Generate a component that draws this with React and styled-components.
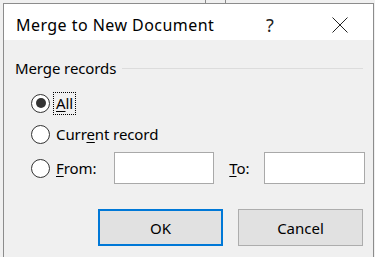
import React, { useState } from "react";
import styled, { createGlobalStyle } from "styled-components";

const GlobalStyle = createGlobalStyle`
  html, body {
    margin: 0;
    padding: 0;
    background: #f0f0f0;
    font-family: "Noto Sans", "Open Sans", sans-serif;
    overflow: hidden;
  }
`;

const Backdrop = styled.div`
  width: 375px;
  height: 257px;
  padding: 3px 0 0 3px;
  box-sizing: border-box;
  background: #f0f0f0;
  position: relative;
`;

// bits of the window behind the dialog, peeking above it
const Behind = styled.span`
  position: absolute;
  top: 0;
  left: ${(p) => p.x}px;
  width: 1px;
  height: 3px;
  background: #8a8a8a;
`;

const Window = styled.div`
  width: 371px;
  height: 260px;
  box-sizing: border-box;
  border: 1px solid #8c8c8c;
  border-bottom: none;
  background: #f0f0f0;
  display: flex;
  flex-direction: column;
`;

const TitleBar = styled.div`
  height: 36px;
  box-sizing: border-box;
  padding: 5px 0 0 12px;
  background: #fff;
  display: flex;
  align-items: center;
  color: #000;
`;

const Title = styled.div`
  flex: 1;
  font-size: 16px;
  letter-spacing: 0.45px;
`;

const TitleButton = styled.div`
  width: ${(p) => p.w}px;
  display: flex;
  justify-content: center;
  align-items: center;
  font-size: 18px;
  color: #222;
`;

const Body = styled.div`
  padding: 19px 10px 0 11px;
  display: flex;
  flex-direction: column;
`;

const GroupHead = styled.div`
  display: flex;
  align-items: center;
  gap: 6px;
  font-size: 15px;
  letter-spacing: -0.1px;
  color: #000;
  height: 18px;

  &::after {
    content: "";
    flex: 1;
    height: 1px;
    background: #dcdcdc;
    margin-top: 1px;
  }
`;

const Options = styled.div`
  display: flex;
  flex-direction: column;
  padding-left: 16px;
  margin-top: 11px;
`;

const OptionRow = styled.label`
  display: flex;
  align-items: center;
  height: ${(p) => p.h}px;
  font-size: 15px;
  letter-spacing: -0.1px;
  color: #000;
  cursor: default;
`;

const RadioCircle = styled.span`
  width: 19px;
  height: 19px;
  border: 1px solid #333;
  border-radius: 50%;
  background: #fff;
  box-sizing: border-box;
  display: flex;
  align-items: center;
  justify-content: center;
  margin-right: 6px;
  flex-shrink: 0;

  &::after {
    content: "";
    width: 10px;
    height: 10px;
    border-radius: 50%;
    background: ${(p) => (p.checked ? "#333" : "transparent")};
  }
`;

const LabelText = styled.span`
  padding: 1px 2px;
  margin-left: -2px;
  outline: ${(p) => (p.focused ? "1px dotted #000" : "none")};
  outline-offset: 0;
  line-height: 19px;
`;

const Key = styled.u`
  text-underline-offset: 2px;
`;

const Field = styled.input`
  width: ${(p) => p.w}px;
  height: 32px;
  box-sizing: border-box;
  border: 1px solid #a9a9a9;
  background: #fff;
  outline: none;
  margin-left: ${(p) => p.ml}px;
  font: inherit;
`;

const Buttons = styled.div`
  display: flex;
  justify-content: flex-end;
  gap: 15px;
  margin-top: 23px;
  padding-right: 0;
`;

const Button = styled.button`
  width: 125px;
  height: 37px;
  box-sizing: border-box;
  background: #e1e1e1;
  border: ${(p) => (p.primary ? "2px solid #0078d7" : "1px solid #adadad")};
  font-family: "Noto Sans", "Open Sans", sans-serif;
  font-size: 15px;
  color: #000;
  padding: 0;
`;

const CloseIcon = () => (
  <svg width="16" height="16" viewBox="0 0 16 16">
    <path d="M0.5 0.5 L15.5 15.5 M15.5 0.5 L0.5 15.5" stroke="#222" strokeWidth="1" />
  </svg>
);

const App = () => {
  const [choice, setChoice] = useState("all");
  return (
    <>
      <GlobalStyle />
      <Backdrop>
        <Behind x={205} />
        <Behind x={225} />
        <Window>
          <TitleBar>
            <Title>Merge to New Document</Title>
            <TitleButton w={20}>?</TitleButton>
            <TitleButton w={30} style={{ marginLeft: 45, marginRight: 18 }}>
              <CloseIcon />
            </TitleButton>
          </TitleBar>
          <Body>
            <GroupHead>Merge records</GroupHead>
            <Options>
              <OptionRow h={30} onClick={() => setChoice("all")}>
                <RadioCircle checked={choice === "all"} />
                <LabelText focused>
                  <Key>A</Key>ll
                </LabelText>
              </OptionRow>
              <OptionRow h={32} onClick={() => setChoice("current")}>
                <RadioCircle checked={choice === "current"} />
                <LabelText>
                  Curr<Key>e</Key>nt record
                </LabelText>
              </OptionRow>
              <OptionRow h={36} onClick={() => setChoice("from")}>
                <RadioCircle checked={choice === "from"} />
                <LabelText>
                  <Key>F</Key>rom:
                </LabelText>
                <Field ml={16} w={100} />
                <LabelText style={{ marginLeft: 13 }}>
                  <Key>T</Key>o:
                </LabelText>
                <Field ml={13} w={101} />
              </OptionRow>
            </Options>
            <Buttons>
              <Button primary>OK</Button>
              <Button>Cancel</Button>
            </Buttons>
          </Body>
        </Window>
      </Backdrop>
    </>
  );
};

export default App;
